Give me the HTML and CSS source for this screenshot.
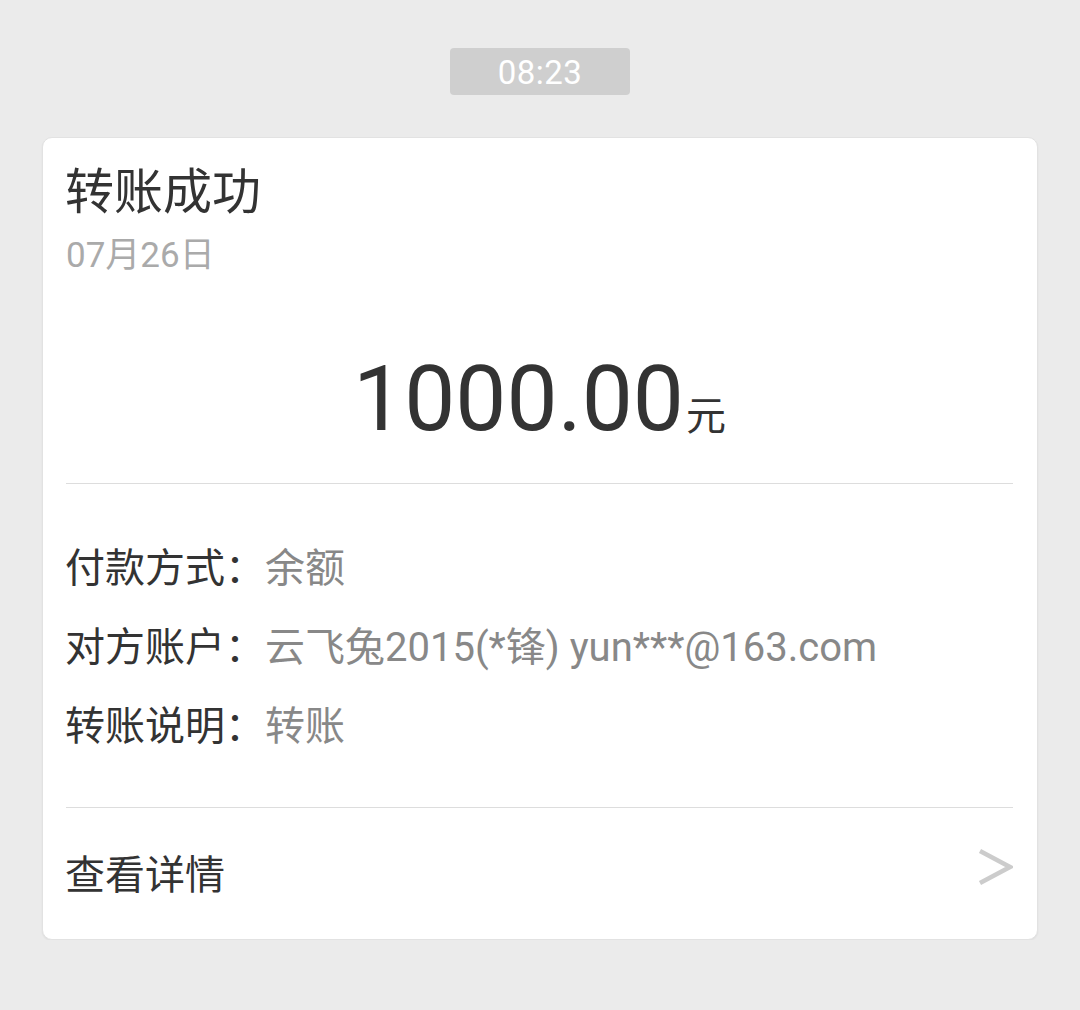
FILE: index.html
```html
<!DOCTYPE html>
<html lang="zh-CN">
<head>
<meta charset="utf-8">
<link rel="stylesheet" href="styles.css">
</head>
<body>
<div class="page">
  <div class="time">08:23</div>
  <div class="card">
    <div class="head">
      <div class="title">转账成功</div>
      <div class="date">07月26日</div>
    </div>
    <div class="amount"><span class="num">1000.00</span><span class="unit">元</span></div>
    <div class="divider"></div>
    <div class="rows">
      <div class="row"><span class="label">付款方式：</span><span class="value">余额</span></div>
      <div class="row"><span class="label">对方账户：</span><span class="value">云飞兔2015(*锋) yun***@163.com</span></div>
      <div class="row"><span class="label">转账说明：</span><span class="value">转账</span></div>
    </div>
    <div class="divider"></div>
    <div class="detail">
      <span class="detail-text">查看详情</span>
      <svg class="chev" width="36" height="38" viewBox="0 0 36 38"><polyline points="3,3 33,19 3,35" fill="none" stroke="#cccccc" stroke-width="4.5" stroke-linejoin="miter"/></svg>
    </div>
  </div>
</div>
</body>
</html>
```

FILE: styles.css
```css
html, body {
  margin: 0;
  padding: 0;
  background: #ebebeb;
}
body {
  font-family: Roboto, "Noto Sans CJK SC", sans-serif;
  color: #333333;
}
.page {
  display: flex;
  flex-direction: column;
  align-items: center;
  padding-top: 48px;
}
.time {
  width: 180px;
  height: 47px;
  background: #cfcfcf;
  border-radius: 4px;
  color: #ffffff;
  font-size: 33px;
  line-height: 49px;
  letter-spacing: 0.5px;
  text-align: center;
}
.card {
  margin-top: 42px;
  background: #ffffff;
  border: 1px solid #e2e2e2;
  border-radius: 10px;
  box-shadow: 0 1px 2px rgba(0,0,0,0.06);
  padding: 0 24px 0 23px;
  box-sizing: content-box;
  width: 947px;
}
.head {
  padding-top: 31px;
}
.title {
  font-size: 49px;
  line-height: 48px;
  color: #333333;
  margin-left: -1px;
}
.date {
  margin-top: 22px;
  font-size: 35px;
  line-height: 34px;
  color: #aaaaaa;
}
.amount {
  margin-top: 81px;
  display: flex;
  justify-content: center;
  align-items: baseline;
  height: 90px;
  line-height: 90px;
}
.num {
  font-size: 91px;
  color: #333333;
}
.unit {
  font-size: 40px;
  color: #333333;
  margin-left: 2px;
}
.divider {
  height: 1px;
  background: #dddddd;
}
.amount + .divider {
  margin-top: 39px;
}
.rows {
  padding: 45px 0 41px;
}
.row {
  font-size: 40px;
  line-height: 79px;
  height: 79px;
  white-space: nowrap;
  margin-left: -1px;
}
.label {
  color: #333333;
}
.value {
  color: #888888;
}
.detail {
  display: flex;
  align-items: center;
  justify-content: space-between;
  height: 131px;
}
.detail-text {
  font-size: 40px;
  line-height: 40px;
  color: #333333;
  margin-top: 4px;
  margin-left: -1px;
}
.chev {
  margin-top: -14px;
}
```
